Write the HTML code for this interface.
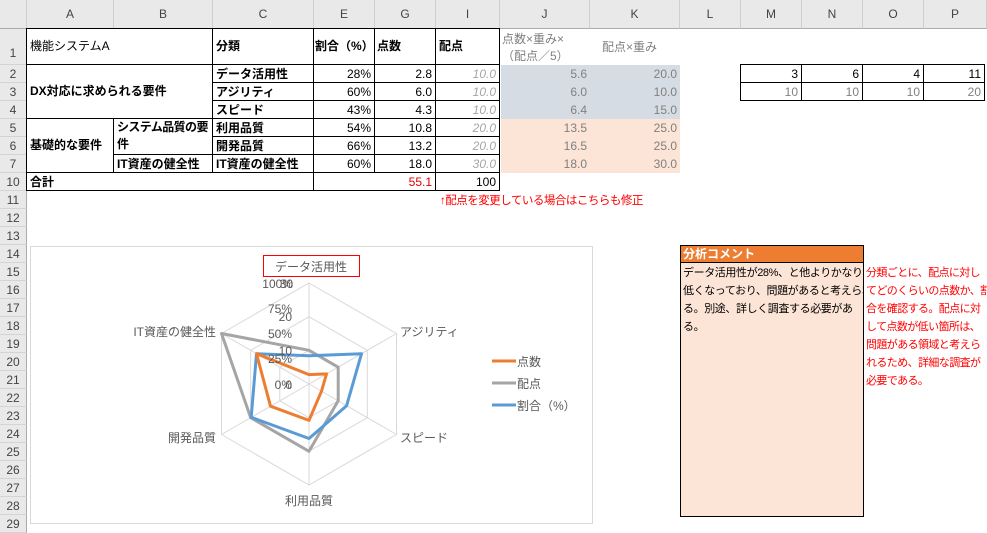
<!DOCTYPE html>
<html><head><meta charset="utf-8"><style>
*{margin:0;padding:0;box-sizing:border-box}
body{width:987px;height:525px;overflow:hidden;background:#fff;position:relative;font-family:"Liberation Sans","Noto Sans CJK JP",sans-serif;font-size:12px;color:#000}
.a{position:absolute;white-space:nowrap}
.ch{position:absolute;top:0;height:29px;line-height:29px;text-align:center;color:#444;font-size:12px;border-right:1px solid #cfcfcf;border-bottom:1px solid #ababab;background:#e9e9e9}
.rh{position:absolute;left:0;width:27px;text-align:center;color:#444;background:#e9e9e9;border-right:1px solid #ababab;border-bottom:1px solid #d4d4d4;font-size:12px}
.c{position:absolute;line-height:18px;padding:0 3px;white-space:nowrap;overflow:hidden}
.b{border:1px solid #000;margin:-1px 0 0 -1px}
.r{text-align:right}
.bold{font-weight:bold}
.gi{color:#a6a6a6;font-style:italic}
.g{color:#808080}
</style></head><body>
<div class="ch" style="left:0;width:27px;background:#e9e9e9"></div>
<div class="ch" style="left:27px;width:87px">A</div>
<div class="ch" style="left:114px;width:99px">B</div>
<div class="ch" style="left:213px;width:101px">C</div>
<div class="ch" style="left:314px;width:61px">E</div>
<div class="ch" style="left:375px;width:61px">G</div>
<div class="ch" style="left:436px;width:64px">I</div>
<div class="ch" style="left:500px;width:90px">J</div>
<div class="ch" style="left:590px;width:90px">K</div>
<div class="ch" style="left:680px;width:61px">L</div>
<div class="ch" style="left:741px;width:61px">M</div>
<div class="ch" style="left:802px;width:61px">N</div>
<div class="ch" style="left:863px;width:61px">O</div>
<div class="ch" style="left:924px;width:63px">P</div>
<div class="rh" style="top:29px;height:36px;line-height:48px">1</div>
<div class="rh" style="top:65px;height:18px;line-height:18px">2</div>
<div class="rh" style="top:83px;height:18px;line-height:18px">3</div>
<div class="rh" style="top:101px;height:18px;line-height:18px">4</div>
<div class="rh" style="top:119px;height:18px;line-height:18px">5</div>
<div class="rh" style="top:137px;height:18px;line-height:18px">6</div>
<div class="rh" style="top:155px;height:18px;line-height:18px">7</div>
<div class="rh" style="top:173px;height:18px;line-height:18px">10</div>
<div class="rh" style="top:191px;height:18px;line-height:18px">11</div>
<div class="rh" style="top:209px;height:18px;line-height:18px">12</div>
<div class="rh" style="top:227px;height:18px;line-height:18px">13</div>
<div class="rh" style="top:245px;height:18px;line-height:18px">14</div>
<div class="rh" style="top:263px;height:18px;line-height:18px">15</div>
<div class="rh" style="top:281px;height:18px;line-height:18px">16</div>
<div class="rh" style="top:299px;height:18px;line-height:18px">17</div>
<div class="rh" style="top:317px;height:18px;line-height:18px">18</div>
<div class="rh" style="top:335px;height:18px;line-height:18px">19</div>
<div class="rh" style="top:353px;height:18px;line-height:18px">20</div>
<div class="rh" style="top:371px;height:18px;line-height:18px">21</div>
<div class="rh" style="top:389px;height:18px;line-height:18px">22</div>
<div class="rh" style="top:407px;height:18px;line-height:18px">23</div>
<div class="rh" style="top:425px;height:18px;line-height:18px">24</div>
<div class="rh" style="top:443px;height:18px;line-height:18px">25</div>
<div class="rh" style="top:461px;height:18px;line-height:18px">26</div>
<div class="rh" style="top:479px;height:18px;line-height:18px">27</div>
<div class="rh" style="top:497px;height:18px;line-height:18px">28</div>
<div class="rh" style="top:515px;height:18px;line-height:18px">29</div>

<div class="c b" style="left:27px;top:29px;width:187px;height:37px;line-height:34px">機能システムA</div>
<div class="c b bold" style="left:213px;top:29px;width:102px;height:37px;line-height:34px">分類</div>
<div class="c b bold" style="left:314px;top:29px;width:62px;height:37px;line-height:34px;padding:0 1px">割合（%）</div>
<div class="c b bold" style="left:375px;top:29px;width:62px;height:37px;line-height:34px;padding:0 2px">点数</div>
<div class="c b bold" style="left:436px;top:29px;width:65px;height:37px;line-height:34px">配点</div>
<div class="c g" style="left:500px;top:31px;width:90px;line-height:17px;font-size:12px;padding:0 2px">点数×重み×<br>（配点／5）</div>
<div class="c g" style="left:590px;top:29px;width:90px;line-height:36px;font-size:12px;padding:0 12px">配点×重み</div>
<div class="c b bold" style="left:27px;top:65px;width:187px;height:55px;line-height:53px">DX対応に求められる要件</div>
<div class="c b bold" style="left:27px;top:119px;width:88px;height:55px;line-height:53px">基礎的な要件</div>
<div class="c b bold" style="left:114px;top:119px;width:100px;height:37px;line-height:17px;letter-spacing:-0.6px">システム品質の要<br>件</div>
<div class="c b bold" style="left:114px;top:155px;width:100px;height:19px">IT資産の健全性</div>
<div class="c b bold" style="left:213px;top:65px;width:102px;height:19px">データ活用性</div>
<div class="c b bold" style="left:213px;top:83px;width:102px;height:19px">アジリティ</div>
<div class="c b bold" style="left:213px;top:101px;width:102px;height:19px">スピード</div>
<div class="c b bold" style="left:213px;top:119px;width:102px;height:19px">利用品質</div>
<div class="c b bold" style="left:213px;top:137px;width:102px;height:19px">開発品質</div>
<div class="c b bold" style="left:213px;top:155px;width:102px;height:19px">IT資産の健全性</div>
<div class="c b r" style="left:314px;top:65px;width:62px;height:19px">28%</div>
<div class="c b r" style="left:314px;top:83px;width:62px;height:19px">60%</div>
<div class="c b r" style="left:314px;top:101px;width:62px;height:19px">43%</div>
<div class="c b r" style="left:314px;top:119px;width:62px;height:19px">54%</div>
<div class="c b r" style="left:314px;top:137px;width:62px;height:19px">66%</div>
<div class="c b r" style="left:314px;top:155px;width:62px;height:19px">60%</div>
<div class="c b r" style="left:375px;top:65px;width:62px;height:19px">2.8</div>
<div class="c b r" style="left:375px;top:83px;width:62px;height:19px">6.0</div>
<div class="c b r" style="left:375px;top:101px;width:62px;height:19px">4.3</div>
<div class="c b r" style="left:375px;top:119px;width:62px;height:19px">10.8</div>
<div class="c b r" style="left:375px;top:137px;width:62px;height:19px">13.2</div>
<div class="c b r" style="left:375px;top:155px;width:62px;height:19px">18.0</div>
<div class="c b r gi" style="left:436px;top:65px;width:65px;height:19px">10.0</div>
<div class="c b r gi" style="left:436px;top:83px;width:65px;height:19px">10.0</div>
<div class="c b r gi" style="left:436px;top:101px;width:65px;height:19px">10.0</div>
<div class="c b r gi" style="left:436px;top:119px;width:65px;height:19px">20.0</div>
<div class="c b r gi" style="left:436px;top:137px;width:65px;height:19px">20.0</div>
<div class="c b r gi" style="left:436px;top:155px;width:65px;height:19px">30.0</div>
<div class="c b bold" style="left:27px;top:173px;width:288px;height:19px">合計</div>
<div class="c b r" style="left:314px;top:173px;width:123px;height:19px;color:#e00000">55.1</div>
<div class="c b r" style="left:436px;top:173px;width:65px;height:19px">100</div>
<div class="a" style="left:501px;top:65px;width:179px;height:54px;background:#d6dce4"></div>
<div class="a" style="left:501px;top:119px;width:179px;height:54px;background:#fce4d6"></div>
<div class="c r g" style="left:500px;top:65px;width:90px">5.6</div>
<div class="c r g" style="left:500px;top:83px;width:90px">6.0</div>
<div class="c r g" style="left:500px;top:101px;width:90px">6.4</div>
<div class="c r g" style="left:500px;top:119px;width:90px">13.5</div>
<div class="c r g" style="left:500px;top:137px;width:90px">16.5</div>
<div class="c r g" style="left:500px;top:155px;width:90px">18.0</div>
<div class="c r g" style="left:590px;top:65px;width:90px">20.0</div>
<div class="c r g" style="left:590px;top:83px;width:90px">10.0</div>
<div class="c r g" style="left:590px;top:101px;width:90px">15.0</div>
<div class="c r g" style="left:590px;top:119px;width:90px">25.0</div>
<div class="c r g" style="left:590px;top:137px;width:90px">25.0</div>
<div class="c r g" style="left:590px;top:155px;width:90px">30.0</div>
<div class="c b r" style="left:741px;top:65px;width:62px;height:19px">3</div>
<div class="c b r" style="left:802px;top:65px;width:62px;height:19px">6</div>
<div class="c b r" style="left:863px;top:65px;width:62px;height:19px">4</div>
<div class="c b r" style="left:924px;top:65px;width:62px;height:19px">11</div>
<div class="c b r g" style="left:741px;top:83px;width:62px;height:19px">10</div>
<div class="c b r g" style="left:802px;top:83px;width:62px;height:19px">10</div>
<div class="c b r g" style="left:863px;top:83px;width:62px;height:19px">10</div>
<div class="c b r g" style="left:924px;top:83px;width:62px;height:19px">20</div>
<div class="c" style="left:440px;top:192px;color:#ff0000;padding:0;font-size:11.5px;letter-spacing:-0.5px">↑配点を変更している場合はこちらも修正</div>

<svg class="a" style="left:0;top:0" width="987" height="525" font-family="Liberation Sans, Noto Sans CJK JP, sans-serif">
<rect x="30.5" y="246.5" width="562" height="277" fill="#fff" stroke="#d9d9d9"/>
<g fill="none" stroke="#d9d9d9" stroke-width="1">
<polygon points="309,283 396.5,333.5 396.5,434.5 309,485 221.5,434.5 221.5,333.5"/>
<polygon points="309,316.7 367.3,350.3 367.3,417.7 309,451.3 250.7,417.7 250.7,350.3"/>
<polygon points="309,350.3 338.2,367.2 338.2,400.8 309,417.7 279.8,400.8 279.8,367.2"/>
<path d="M309,384L309,283M309,384L396.5,333.5M309,384L396.5,434.5M309,384L309,485M309,384L221.5,434.5M309,384L221.5,333.5"/>
</g>
<g fill="none" stroke-width="3" stroke-linejoin="round">
<polygon stroke="#a5a5a5" points="309,350.3 338.2,367.2 338.2,400.8 309,451.3 250.7,417.7 221.5,333.5"/>
<polygon stroke="#5b9bd5" points="309,355.7 361.5,353.7 346.6,405.7 309,438.5 251.2,417.3 256.5,353.7"/>
<polygon stroke="#ed7d31" points="309,374.6 326.5,373.9 321.5,391.2 309,420.4 270.5,406.2 256.5,353.7"/>
</g>
<g fill="#595959" font-size="12" text-anchor="end">
<text x="293" y="288">100%</text><text x="293" y="288">30</text>
<text x="292" y="313">75%</text><text x="292" y="321">20</text>
<text x="292" y="338">50%</text><text x="292" y="355">10</text>
<text x="292" y="363">25%</text>
<text x="292" y="389">0%</text><text x="292" y="389">0</text>
<text x="216" y="336">IT資産の健全性</text>
<text x="216" y="442">開発品質</text>
</g>
<g fill="#595959" font-size="12">
<text x="400" y="336">アジリティ</text>
<text x="400" y="442">スピード</text>
<text x="309" y="505" text-anchor="middle">利用品質</text>
<text x="517" y="366">点数</text>
<text x="517" y="388">配点</text>
<text x="517" y="410">割合（%）</text>
</g>
<rect x="263.5" y="255.5" width="96" height="21" fill="none" stroke="#ff0000"/>
<text x="311" y="271" font-size="12" fill="#595959" text-anchor="middle">データ活用性</text>
<g stroke-width="3"><line x1="492" y1="361" x2="516" y2="361" stroke="#ed7d31"/><line x1="492" y1="383" x2="516" y2="383" stroke="#a5a5a5"/><line x1="492" y1="405" x2="516" y2="405" stroke="#5b9bd5"/></g>
</svg>

<div class="a" style="left:680px;top:245px;width:184px;height:272px;background:#fce4d6;border:1px solid #000"></div>
<div class="a" style="left:681px;top:246px;width:182px;height:17px;background:#ed7d31;border-bottom:1px solid #000;color:#fff;font-weight:bold;line-height:16px;padding-left:2px">分析コメント</div>
<div class="a" style="left:683px;top:264px;width:180px;overflow:hidden;line-height:18px;font-size:11px;letter-spacing:-0.4px">データ活用性が28%、と他よりかなり<br>低くなっており、問題があると考えられ<br>る。別途、詳しく調査する必要があ<br>る。</div>
<div class="a" style="left:866px;top:264px;width:121px;overflow:hidden;line-height:18px;color:#ff0000;font-size:11px;letter-spacing:-0.6px">分類ごとに、配点に対し<br>てどのくらいの点数か、割<br>合を確認する。配点に対<br>して点数が低い箇所は、<br>問題がある領域と考えら<br>れるため、詳細な調査が<br>必要である。</div>
</body></html>
